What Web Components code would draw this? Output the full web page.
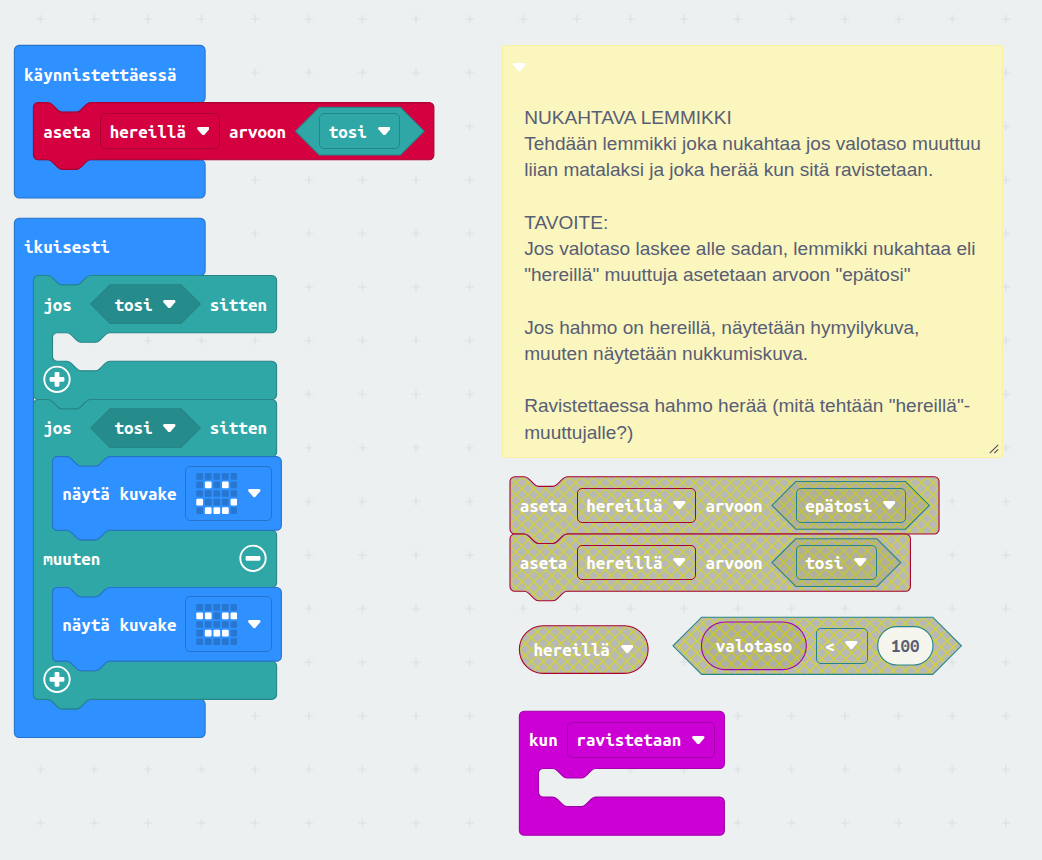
<!DOCTYPE html>
<html lang="fi">
<head>
<meta charset="utf-8">
<title>MakeCode – lemmikki</title>
<style>
html,body{margin:0;height:100%;overflow:hidden;background:#ecf0f1}
.basic{--fill:#2f90ff;--line:#2673cc}
.vars{--fill:#d4003f;--line:#a90132}
.logic{--fill:#30a7a7;--line:#268586}
.dark{--fill:#268c8b}
.input{--fill:#cc00d4;--line:#a300aa}
.num{--fill:#fff;--line:#268586}
.up{--dy:.3px}
</style>
</head>
<body>
<mc-workspace>
  <mc-block class="basic" hat w="160" rows="48 48 32" style="left:14.4px;top:45.4px">
    <mc-row><mc-label>käynnistettäessä</mc-label></mc-row>
    <mc-mouth>
      <mc-block class="vars" w="336" rows="48">
        <mc-row><mc-label>aseta</mc-label><mc-field>hereillä</mc-field><mc-label>arvoon</mc-label><mc-value class="logic" shape="hex" w="108" h="40"><mc-field>tosi</mc-field></mc-value></mc-row>
      </mc-block>
    </mc-mouth>
  </mc-block>

  <mc-block class="basic" hat w="160" rows="48 355.6 32" style="left:14.4px;top:218.3px">
    <mc-row class="up"><mc-label>ikuisesti</mc-label></mc-row>
    <mc-mouth>
      <mc-block class="logic" w="204" rows="48 24 32">
        <mc-row><mc-label wide>jos</mc-label><mc-value class="dark" shape="hex" w="92" h="32.4"><mc-field bare>tosi</mc-field></mc-value><mc-label>sitten</mc-label></mc-row>
        <mc-mouth></mc-mouth>
        <mc-row><mc-toggle></mc-toggle></mc-row>
      </mc-block>
      <mc-block class="logic" w="204" rows="48 61.8 48 61.8 32">
        <mc-row class="up"><mc-label wide>jos</mc-label><mc-value class="dark" shape="hex" w="92" h="32.4"><mc-field bare>tosi</mc-field></mc-value><mc-label>sitten</mc-label></mc-row>
        <mc-mouth>
          <mc-block class="basic" w="192" rows="61.8">
            <mc-row><mc-label>näytä kuvake</mc-label><mc-field tall><mc-leds pattern="00000 01010 00000 10001 01110"></mc-leds></mc-field></mc-row>
          </mc-block>
        </mc-mouth>
        <mc-row class="up"><mc-label>muuten</mc-label><mc-toggle minus></mc-toggle></mc-row>
        <mc-mouth>
          <mc-block class="basic" w="192" rows="61.8">
            <mc-row><mc-label>näytä kuvake</mc-label><mc-field tall><mc-leds pattern="00000 11011 00000 01110 00000"></mc-leds></mc-field></mc-row>
          </mc-block>
        </mc-mouth>
        <mc-row><mc-toggle></mc-toggle></mc-row>
      </mc-block>
    </mc-mouth>
  </mc-block>

  <mc-note style="left:502px;top:45px">NUKAHTAVA LEMMIKKI
Tehdään lemmikki joka nukahtaa jos valotaso muuttuu
liian matalaksi ja joka herää kun sitä ravistetaan.

TAVOITE:
Jos valotaso laskee alle sadan, lemmikki nukahtaa eli
"hereillä" muuttuja asetetaan arvoon "epätosi"

Jos hahmo on hereillä, näytetään hymyilykuva,
muuten näytetään nukkumiskuva.

Ravistettaessa hahmo herää (mitä tehtään "hereillä"-
muuttujalle?)</mc-note>

  <mc-block class="vars" off w="360" rows="48" style="left:510px;top:476.8px">
    <mc-row><mc-label>aseta</mc-label><mc-field>hereillä</mc-field><mc-label>arvoon</mc-label><mc-value class="logic" off shape="hex" w="132" h="40"><mc-field>epätosi</mc-field></mc-value></mc-row>
  </mc-block>
  <mc-block class="vars up" off w="336" rows="48" style="left:510px;top:534px">
    <mc-row><mc-label>aseta</mc-label><mc-field>hereillä</mc-field><mc-label>arvoon</mc-label><mc-value class="logic" off shape="hex" w="108" h="40"><mc-field>tosi</mc-field></mc-value></mc-row>
  </mc-block>

  <mc-value class="vars up" off free shape="pill" w="108" h="40" style="left:519.4px;top:625.7px"><mc-field bare>hereillä</mc-field></mc-value>
  <mc-value class="logic up" off free shape="hex" w="242" h="48" style="left:673px;top:617.2px">
    <mc-value class="input" off shape="pill" w="88" h="40"><mc-label>valotaso</mc-label></mc-value><mc-field>&lt;</mc-field><mc-value number class="num" shape="pill" w="46.4" h="32.2"><mc-label>100</mc-label></mc-value>
  </mc-value>

  <mc-block class="input up" hat w="172" rows="48 24 32" style="left:519.4px;top:711.3px">
    <mc-row><mc-label>kun</mc-label><mc-field>ravistetaan</mc-field></mc-row>
    <mc-mouth></mc-mouth>
  </mc-block>
</mc-workspace>

<script>
const S = 1.192; // workspace zoom
const NOTCH = 'c2 0 3 1 4 2l4 4c1 1 2 2 4 2h12c2 0 3-1 4-2l4-4c1-1 2-2 4-2';
const NOTCH_BACK = 'c-2 0-3 1-4 2l-4 4c-1 1-2 2-4 2h-12c-2 0-3-1-4-2l-4-4c-1-1-2-2-4-2';
const HATCH = '<defs><pattern id="p" width="10" height="10" patternUnits="userSpaceOnUse"><rect width="10" height="10" fill="#aaa"/><path d="M0 0L10 10M10 0L0 10" stroke="#cc0" stroke-width="1.1"/></pattern></defs>';
const ARROW = '<svg class="arrow" width="12.6" height="8.6" viewBox="0 0 12.6 8.6"><path d="M1.2 0H11.4Q13.2.5 12.2 2.2L7.5 7.7Q6.3 8.9 5.1 7.7L.4 2.2Q-.6.5 1.2 0Z" fill="#fff"/></svg>';

class McElement extends HTMLElement {
  connectedCallback() {
    if (!this.shadowRoot) this.attachShadow({mode: 'open'}).innerHTML = this.view();
  }
  num(name) { return parseFloat(this.getAttribute(name)); }
  // The browser snaps an svg box to whole pixels; shift its path by the remainder.
  alignShape() {
    const box = this.getBoundingClientRect();
    const dx = box.left - Math.round(box.left), dy = box.top - Math.round(box.top);
    this.shadowRoot.querySelector('.shape > path').setAttribute('transform', `translate(${dx / S} ${dy / S})`);
  }
}

function shapeSvg(w, h, d, off, extra = '') {
  return `<svg class="shape" width="${w * S}" height="${h * S}" viewBox="0 0 ${w} ${h}" preserveAspectRatio="xMinYMin">${off ? HATCH : ''}<path d="${d}" fill="${off ? 'url(#p)' : 'var(--fill)'}" ${off ? 'fill-opacity=".8"' : ''} stroke="var(--line)" stroke-width=".92" ${extra}/></svg>`;
}
const SHAPE_CSS = '.shape{position:absolute;left:0;top:0;overflow:visible;z-index:-1}';

customElements.define('mc-workspace', class extends McElement {
  view() {
    return `<style>:host{display:block;position:relative;width:1042px;height:860px;overflow:hidden;background:#ecf0f1;
      font:bold 17.03px/20px "Ubuntu Mono","DejaVu Sans Mono",monospace;color:#fff}
      .grid{position:absolute;inset:0}</style>
      <svg class="grid" width="1042" height="860"><defs><pattern id="g" x="13.8" y="-7.8" width="53.63" height="53.6" patternUnits="userSpaceOnUse"><path d="M22.5 26.8h8.6M26.8 22.5v8.6" stroke="#dbdfe1" stroke-width="1.2"/></pattern></defs><rect width="1042" height="860" fill="url(#g)"/></svg>
      <slot></slot>`;
  }
});

customElements.define('mc-block', class extends McElement {
  view() {
    const w = this.num('w'), hat = this.hasAttribute('hat');
    const rows = this.getAttribute('rows').split(' ').map(Number);
    const total = rows.reduce((a, b) => a + b, 0);
    let y = 0, d = 'M0 4a4 4 0 0 1 4-4' + (hat ? '' : 'H12' + NOTCH);
    rows.forEach((h, i) => {
      y += h;
      if (i % 2) d += `V${y - 4}a4 4 0 0 0 4 4H28${NOTCH}`;
      else {
        d += `H${w - 4}a4 4 0 0 1 4 4V${y - 4}a4 4 0 0 1-4 4`;
        if (i < rows.length - 1) d += `H64${NOTCH_BACK}H20a4 4 0 0 0-4 4`;
      }
    });
    d += (hat ? '' : 'H48' + NOTCH_BACK) + 'H4a4 4 0 0 1-4-4z';
    return `<style>:host{display:grid;position:relative;isolation:isolate;width:${w * S}px;height:${total * S}px;grid-template-rows:${rows.map(h => h * S + 'px').join(' ')}}
      :host([style]){position:absolute}${SHAPE_CSS}</style>${shapeSvg(w, total, d, this.hasAttribute('off'))}<slot></slot>`;
  }
});

customElements.define('mc-row', class extends McElement {
  view() { return '<style>:host{display:flex;align-items:center;gap:9.4px;padding:0 9.5px 0 9.7px;min-width:0}</style><slot></slot>'; }
});

customElements.define('mc-mouth', class extends McElement {
  view() { return '<style>:host{display:block;padding-left:19.07px;min-height:0;min-width:0}</style><slot></slot>'; }
});

customElements.define('mc-label', class extends McElement {
  view() { return '<style>:host{display:block;white-space:nowrap}:host([wide]){margin-right:9.6px}span{display:block;transform:translateY(var(--dy,.8px))}</style><span><slot></slot></span>'; }
});

customElements.define('mc-field', class extends McElement {
  view() {
    return `<style>:host{display:flex;flex:none;align-items:center;box-sizing:border-box;height:35.6px;padding:0 8.5px;border:1.2px solid var(--line);border-radius:5px;white-space:nowrap}
      :host([bare]){border-color:transparent;padding:0;border-width:0}
      :host([tall]){height:55.8px;margin-left:-.6px;padding-left:9.5px;padding-right:9.4px}
      span{display:block;transform:translateY(var(--dy,.8px))}
      :host([tall]) span{transform:none}
      .arrow{display:block;margin:0 .8px 0 10.7px;filter:drop-shadow(0 .5px .4px rgba(0,0,0,.25))}
      :host([tall]) .arrow{margin-left:11.2px}</style><span><slot></slot></span>${ARROW}`;
  }
});

customElements.define('mc-value', class extends McElement {
  view() {
    const w = this.num('w'), h = this.num('h'), r = h / 2, number = this.hasAttribute('number');
    const d = this.getAttribute('shape') === 'hex'
      ? `M${r} 0H${w - r}L${w} ${r}L${w - r} ${h}H${r}L0 ${r}Z`
      : `M${r} 0H${w - r}a${r} ${r} 0 0 1 0 ${h}H${r}a${r} ${r} 0 0 1 0 ${-h}Z`;
    return `<style>:host{display:flex;flex:none;position:relative;isolation:isolate;align-items:center;justify-content:center;gap:9.4px;width:${w * S}px;height:${h * S}px}
      :host([free]){position:absolute}
      :host([number]){color:#575e75}${SHAPE_CSS}</style>${shapeSvg(w, h, d, this.hasAttribute('off'), number ? 'fill-opacity=".84"' : '')}<slot></slot>`;
  }
});

customElements.define('mc-leds', class extends McElement {
  view() {
    const cells = [...this.getAttribute('pattern').replace(/ /g, '')].map((c, i) =>
      `<rect x="${.3 + (i % 5) * 8.57}" y="${(i / 5 | 0) * 8.57}" width="6.7" height="6.7" rx="1.2" fill="${c === '1' ? '#fff' : '#2776d0'}"/>`).join('');
    return `<style>:host{display:block}svg{display:block}</style><svg width="41.4" height="41.2">${cells}</svg>`;
  }
});

customElements.define('mc-toggle', class extends McElement {
  view() {
    const minus = this.hasAttribute('minus');
    return `<style>:host{display:block;flex:none;height:28px;transform:translateY(-.7px)}:host([minus]){margin-left:auto}svg{display:block}</style>
      <svg width="28" height="28" viewBox="0 0 28 28"><circle cx="14" cy="14" r="12.7" fill="none" stroke="#fff" stroke-width="1.9"/><rect x="6.6" y="11.6" width="14.8" height="4.8" rx="1.1" fill="#fff"/>${minus ? '' : '<rect x="11.6" y="6.6" width="4.8" height="14.8" rx="1.1" fill="#fff"/>'}</svg>`;
  }
});

customElements.define('mc-note', class extends McElement {
  view() {
    return `<style>:host{display:flex;flex-direction:column;position:absolute;box-sizing:border-box;width:501px;height:412.5px;background:#fbf5be;border:1px solid #faf1a0;border-radius:2px}
      .bar{height:58.9px;padding:16.6px 0 0 10.2px;box-sizing:border-box}
      .arrow{display:block}
      p{margin:0 0 0 21.2px;white-space:pre;font:normal 19.07px/26.23px "Liberation Sans",Arial,sans-serif;color:#575e75}
      .grip{position:absolute;right:3px;bottom:3px}</style>
      <div class="bar">${ARROW}</div><p><slot></slot></p>
      <svg class="grip" width="10" height="10"><path d="M.8 9.2L9.2.8M5.3 9.2L9.2 5.3" stroke="#555" stroke-width="1.2"/></svg>`;
  }
});

document.querySelectorAll('mc-block, mc-value').forEach(el => el.alignShape());
</script>
</body>
</html>
